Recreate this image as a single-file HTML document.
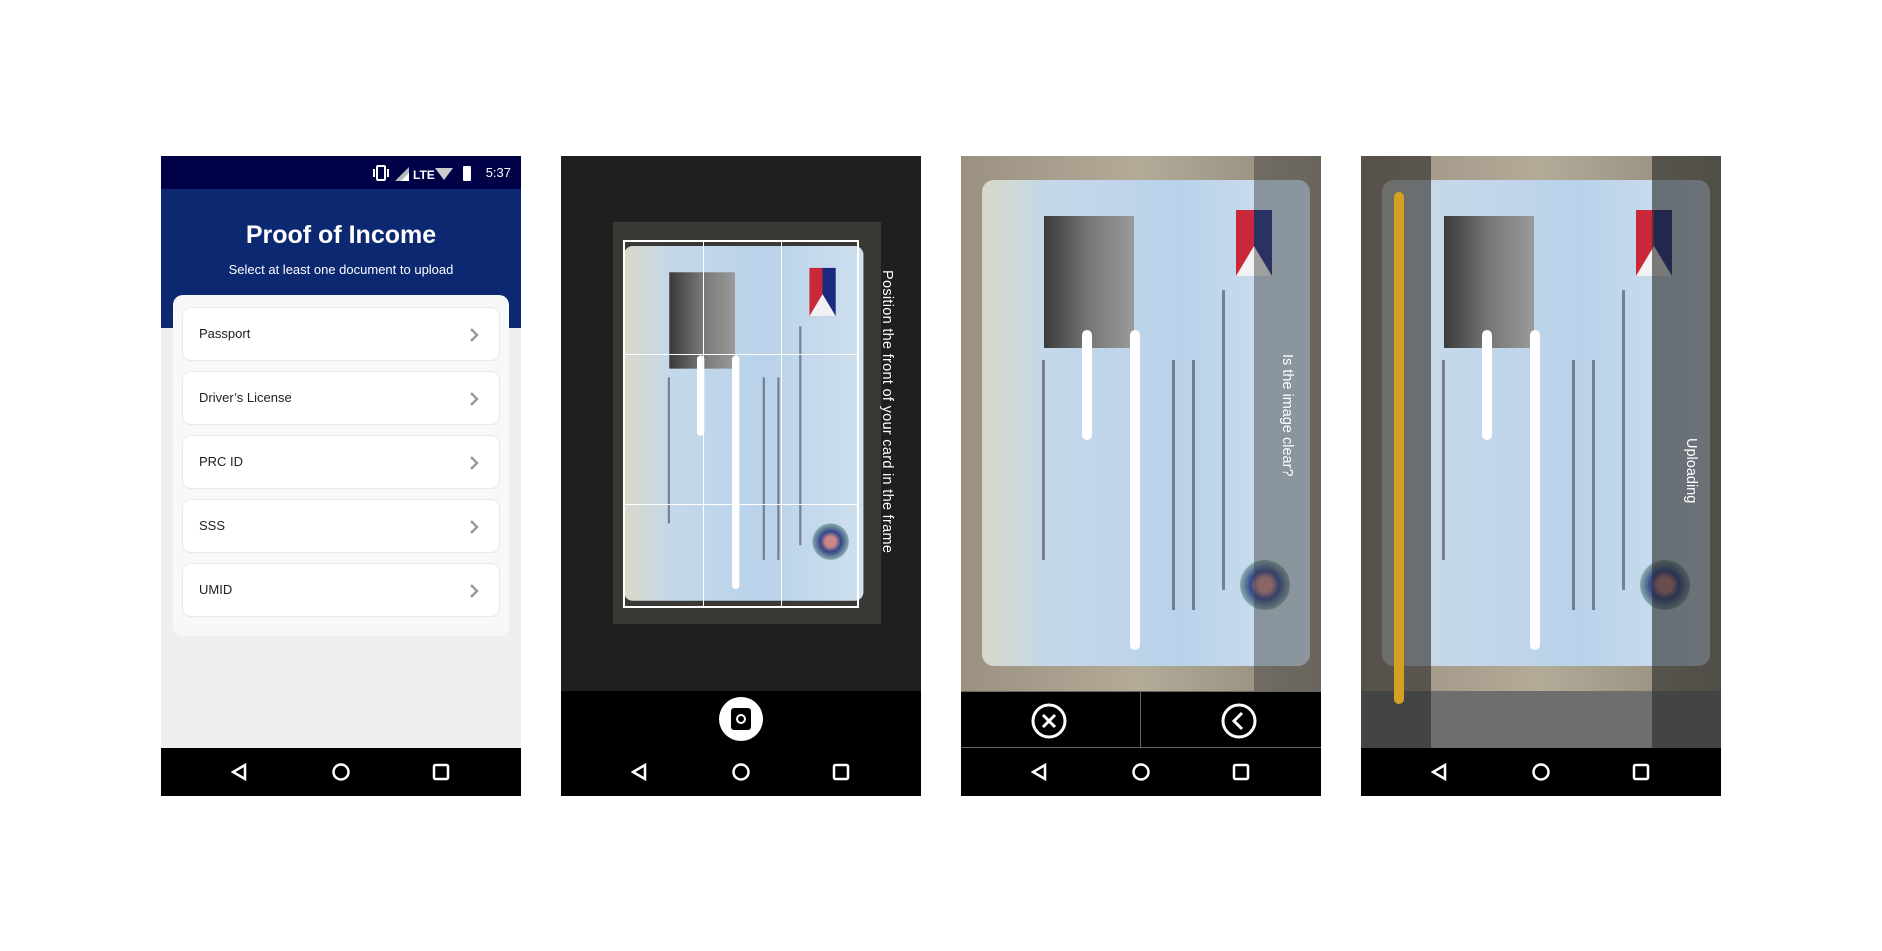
<!DOCTYPE html>
<html><head><meta charset="utf-8"><style>
*{margin:0;padding:0;box-sizing:border-box}
body{width:1882px;height:951px;background:#fff;position:relative;overflow:hidden;font-family:"Liberation Sans",sans-serif}
.scr{position:absolute;top:156px;width:360px;height:640px;overflow:hidden}
.nav{position:absolute;left:0;right:0;bottom:0;height:48px;background:#000}
.nav svg{position:absolute;top:14px}
.card{position:absolute;width:328px;height:486px;border-radius:12px;background:linear-gradient(90deg,#d8d8c8 0%,#c4d8ea 20%,#b9d2ea 60%,#cfe0ee 100%);overflow:hidden}
.card .ph{position:absolute;left:62px;top:36px;width:90px;height:132px;background:linear-gradient(90deg,#3a3a3a,#777 50%,#9a9a9a)}
.card .fl{position:absolute;left:254px;top:30px;width:36px;height:66px;background:linear-gradient(90deg,#c8283a 50%,#1a2a80 50%)}
.card .fl:after{content:"";position:absolute;left:0;bottom:0;border-left:18px solid transparent;border-right:18px solid transparent;border-bottom:30px solid #f2f2f2}
.card .se{position:absolute;left:258px;top:380px;width:50px;height:50px;border-radius:50%;background:radial-gradient(#c88 20%,#33468a 40%,#8aa 70%)}
.card .w{position:absolute;background:#fff;border-radius:6px;width:10px}
.card .t{position:absolute;background:#445;opacity:.6;width:3px}
.it{height:54px;background:#fff;border:1px solid #e8e8e8;border-radius:9px;margin-bottom:10px;font-size:13px;color:#222;padding:18px 16px;position:relative}
.it svg{position:absolute;right:20px;top:19px}
</style></head><body>

<!-- Screen 1 -->
<div class="scr" style="left:161px;background:#efefef">
 <div style="position:absolute;left:0;top:0;width:360px;height:33px;background:#000046;color:#fff;font-size:13px">
  <span style="position:absolute;right:10px;top:9px">5:37</span>
  <svg style="position:absolute;right:48px;top:7px" width="100" height="20" viewBox="0 0 100 20" fill="#fff"><rect x="4" y="3" width="8" height="14" rx="1" fill="none" stroke="#fff" stroke-width="2"/><rect x="0" y="6" width="2" height="8"/><rect x="14" y="6" width="2" height="8"/><polygon points="22,18 36,4 36,18" fill="#bbb"/><polygon points="28,18 36,10 36,18"/><text x="40" y="16" font-size="12" font-weight="bold" fill="#fff">LTE</text><polygon points="62,5 80,5 71,17" fill="#ccc"/><rect x="90" y="3" width="8" height="15" rx="1"/></svg>
 </div>
 <div style="position:absolute;left:0;top:33px;width:360px;height:139px;background:#0c2870;color:#fff;text-align:center">
  <div style="margin-top:32px;font-size:25px;font-weight:bold">Proof of Income</div>
  <div style="margin-top:12px;font-size:13px">Select at least one document to upload</div>
 </div>
 <div style="position:absolute;left:12px;top:139px;width:336px;height:341px;background:#f8f8f8;border-radius:10px"></div>
 <div style="position:absolute;left:21px;top:151px;width:318px">
  <div class="it">Passport<svg width="10" height="16" viewBox="0 0 10 16"><path d="M2 2 L8 8 L2 14" fill="none" stroke="#999" stroke-width="2.5"/></svg></div>
  <div class="it">Driver’s License<svg width="10" height="16" viewBox="0 0 10 16"><path d="M2 2 L8 8 L2 14" fill="none" stroke="#999" stroke-width="2.5"/></svg></div>
  <div class="it">PRC ID<svg width="10" height="16" viewBox="0 0 10 16"><path d="M2 2 L8 8 L2 14" fill="none" stroke="#999" stroke-width="2.5"/></svg></div>
  <div class="it">SSS<svg width="10" height="16" viewBox="0 0 10 16"><path d="M2 2 L8 8 L2 14" fill="none" stroke="#999" stroke-width="2.5"/></svg></div>
  <div class="it" style="margin-bottom:0">UMID<svg width="10" height="16" viewBox="0 0 10 16"><path d="M2 2 L8 8 L2 14" fill="none" stroke="#999" stroke-width="2.5"/></svg></div>
 </div>
 <div class="nav"><svg style="left:70px" width="220" height="20" viewBox="0 0 220 20" fill="none" stroke="#fff" stroke-width="2.5"><polygon points="14,3 14,17 2,10"/><circle cx="110" cy="10" r="7.5"/><rect x="203" y="3" width="14" height="14" rx="1.5"/></svg></div>
</div>

<!-- Screen 2 -->
<div class="scr" style="left:561px;background:#1f1f1f">
 <div style="position:absolute;left:52px;top:66px;width:268px;height:402px;background:#3a3834"></div>
 <div class="card" style="left:63px;top:90px;transform:scale(.73);transform-origin:0 0"><div class="ph"></div><div class="fl"></div><div class="se"></div><div class="w" style="left:100px;top:150px;height:110px"></div><div class="w" style="left:148px;top:150px;height:320px"></div><div class="t" style="left:190px;top:180px;height:250px"></div><div class="t" style="left:210px;top:180px;height:250px"></div><div class="t" style="left:240px;top:110px;height:300px"></div><div class="t" style="left:60px;top:180px;height:200px"></div></div>
 <div style="position:absolute;left:62px;top:84px;width:236px;height:368px;border:2px solid #fff">
  <div style="position:absolute;left:78px;top:0;bottom:0;width:1px;background:#fff"></div>
  <div style="position:absolute;left:156px;top:0;bottom:0;width:1px;background:#fff"></div>
  <div style="position:absolute;top:112px;left:0;right:0;height:1px;background:#fff"></div>
  <div style="position:absolute;top:262px;left:0;right:0;height:1px;background:#fff"></div>
 </div>
 <div style="position:absolute;left:318px;top:114px;width:0;height:0"><div style="transform:rotate(90deg);transform-origin:0 0;white-space:nowrap;color:#fff;font-size:14.5px;letter-spacing:.3px;position:absolute;left:16px;top:0">Position the front of your card in the frame</div></div>
 <div style="position:absolute;left:0;top:535px;width:360px;height:57px;background:#000"></div>
 <div style="position:absolute;left:158px;top:541px;width:44px;height:44px;border-radius:50%;background:#fff"><div style="position:absolute;left:12px;top:11px;width:20px;height:22px;background:#000;border-radius:3px"></div><div style="position:absolute;left:17px;top:17px;width:10px;height:10px;border:2px solid #fff;border-radius:50%"></div></div>
 <div class="nav"><svg style="left:70px" width="220" height="20" viewBox="0 0 220 20" fill="none" stroke="#fff" stroke-width="2.5"><polygon points="14,3 14,17 2,10"/><circle cx="110" cy="10" r="7.5"/><rect x="203" y="3" width="14" height="14" rx="1.5"/></svg></div>
</div>

<!-- Screen 3 -->
<div class="scr" style="left:961px;background:linear-gradient(90deg,#9c9180,#b3aa98 50%,#8f8677)">
 <div class="card" style="left:21px;top:24px"><div class="ph"></div><div class="fl"></div><div class="se"></div><div class="w" style="left:100px;top:150px;height:110px"></div><div class="w" style="left:148px;top:150px;height:320px"></div><div class="t" style="left:190px;top:180px;height:250px"></div><div class="t" style="left:210px;top:180px;height:250px"></div><div class="t" style="left:240px;top:110px;height:300px"></div><div class="t" style="left:60px;top:180px;height:200px"></div></div>
 <div style="position:absolute;left:293px;top:0;width:67px;height:535px;background:rgba(60,60,60,.45)"></div>
 <div style="position:absolute;left:334px;top:198px;width:0;height:0"><div style="white-space:nowrap;color:#fff;font-size:14.5px;position:absolute;left:0;top:0;transform-origin:0 0;transform:rotate(90deg)">Is the image clear?</div></div>
 <div style="position:absolute;left:0;top:535px;width:360px;height:57px;background:#000;border-top:1px solid #666"><div style="position:absolute;left:179px;top:0;bottom:0;width:1px;background:#666"></div><div style="position:absolute;left:0;right:0;bottom:0;height:1px;background:#666"></div></div>
 <svg style="position:absolute;left:68px;top:545px" width="230" height="40" viewBox="0 0 230 40" fill="none" stroke="#fff" stroke-width="3"><circle cx="20" cy="20" r="16"/><path d="M14 14 L26 26 M26 14 L14 26"/><circle cx="210" cy="20" r="16"/><path d="M213 12 L205 20 L213 28"/></svg>
 <div class="nav"><svg style="left:70px" width="220" height="20" viewBox="0 0 220 20" fill="none" stroke="#fff" stroke-width="2.5"><polygon points="14,3 14,17 2,10"/><circle cx="110" cy="10" r="7.5"/><rect x="203" y="3" width="14" height="14" rx="1.5"/></svg></div>
</div>

<!-- Screen 4 -->
<div class="scr" style="left:1361px;background:linear-gradient(90deg,#9c9180,#b3aa98 50%,#8f8677)">
 <div class="card" style="left:21px;top:24px"><div class="ph"></div><div class="fl"></div><div class="se"></div><div class="w" style="left:100px;top:150px;height:110px"></div><div class="w" style="left:148px;top:150px;height:320px"></div><div class="t" style="left:190px;top:180px;height:250px"></div><div class="t" style="left:210px;top:180px;height:250px"></div><div class="t" style="left:240px;top:110px;height:300px"></div><div class="t" style="left:60px;top:180px;height:200px"></div></div>
 <div style="position:absolute;left:0;top:535px;width:360px;height:57px;background:#6e6e6e"></div>
 <div style="position:absolute;left:0;top:0;width:70px;height:592px;background:rgba(40,40,40,.6)"></div>
 <div style="position:absolute;left:291px;top:0;width:69px;height:592px;background:rgba(40,40,40,.6)"></div>
 <div style="position:absolute;left:33px;top:36px;width:10px;height:512px;border-radius:5px;background:#d6a020"></div>
 <div style="position:absolute;left:338px;top:282px;width:0;height:0"><div style="white-space:nowrap;color:#fff;font-size:14.5px;position:absolute;left:0;top:0;transform-origin:0 0;transform:rotate(90deg)">Uploading</div></div>
 <div class="nav"><svg style="left:70px" width="220" height="20" viewBox="0 0 220 20" fill="none" stroke="#fff" stroke-width="2.5"><polygon points="14,3 14,17 2,10"/><circle cx="110" cy="10" r="7.5"/><rect x="203" y="3" width="14" height="14" rx="1.5"/></svg></div>
</div>

</body></html>
